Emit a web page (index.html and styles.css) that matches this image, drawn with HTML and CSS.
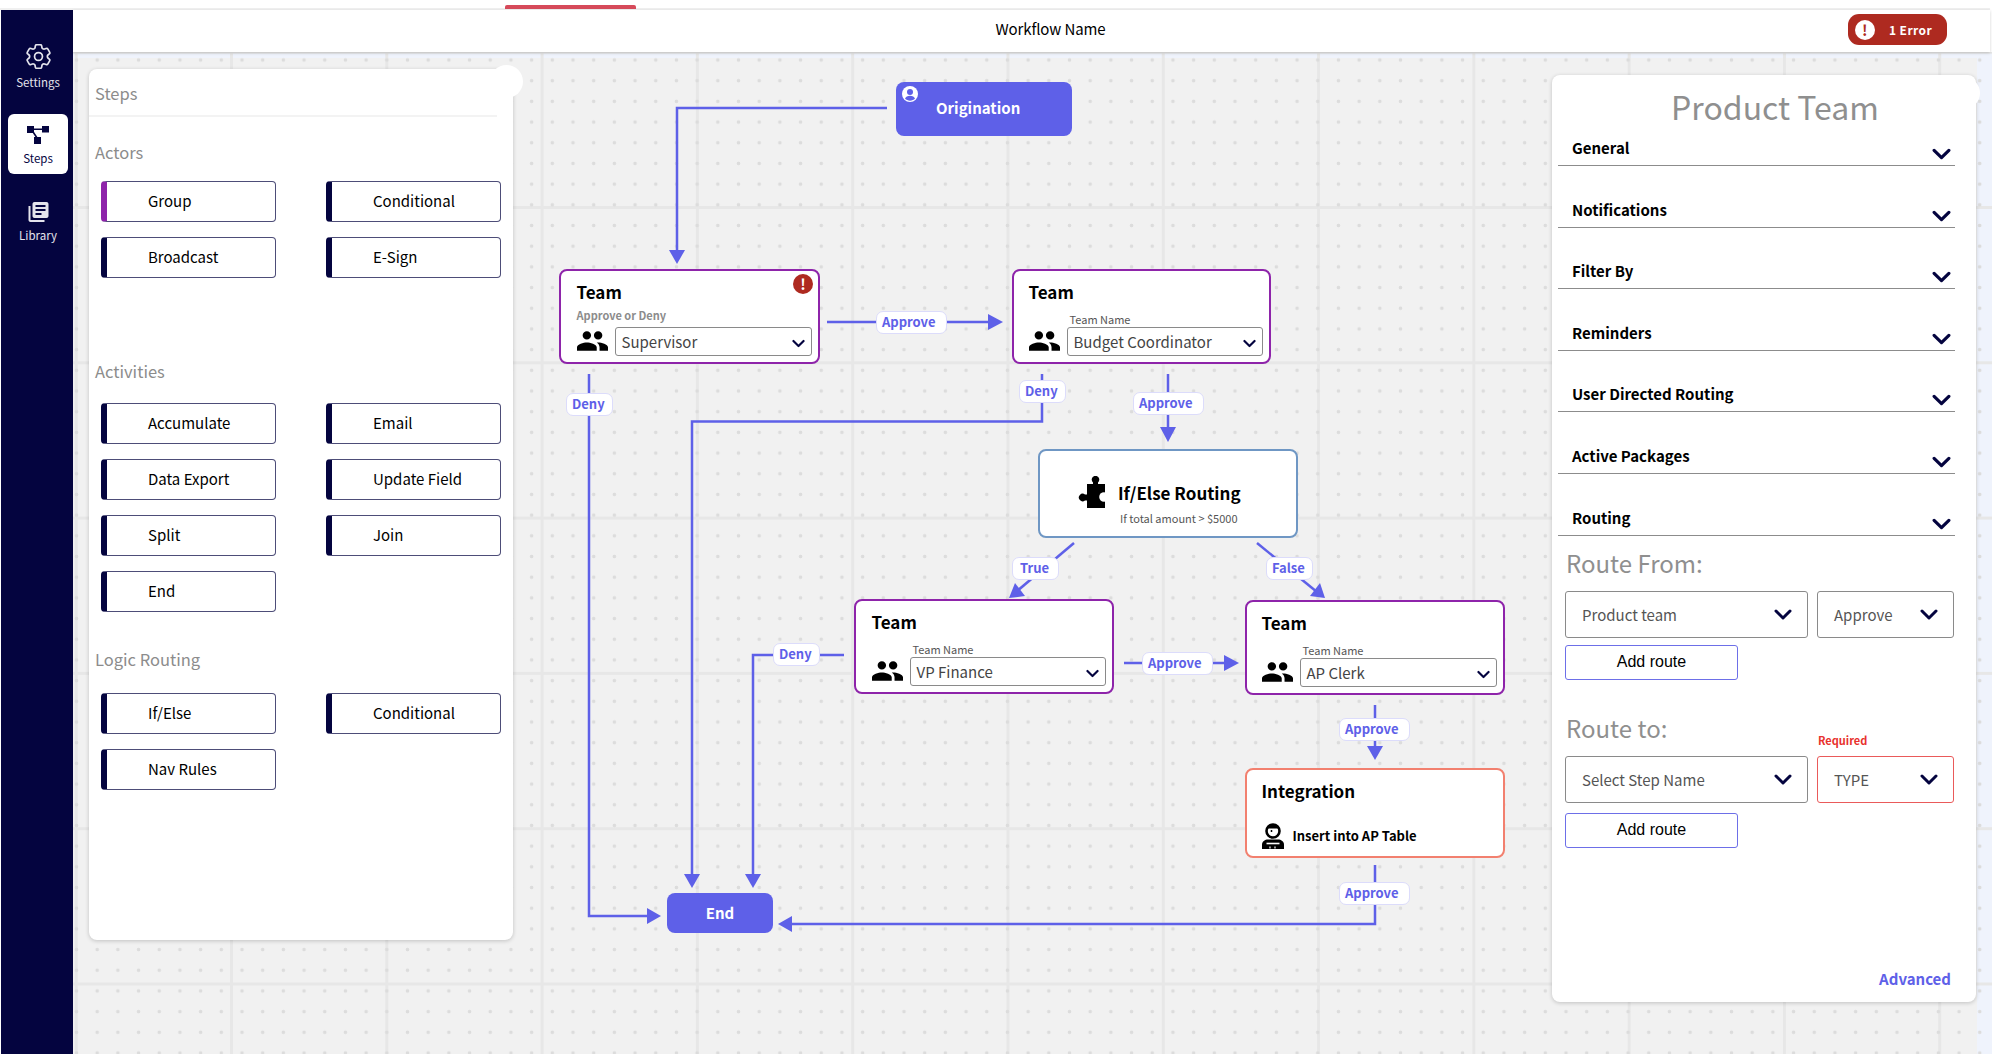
FILE: index.html
```html
<!DOCTYPE html>
<html lang="en">
<head>
    <meta charset="UTF-8">
    <meta name="viewport" content="width=device-width, initial-scale=1.0">
    <title>Workflow Name</title>
    <link rel="stylesheet" href="styles.css">
</head>

<body>
    <svg class="icon-defs" aria-hidden="true">
        <symbol id="chevron" viewBox="0 0 18 11">
            <path d="M2 2l7 7 7-7" fill="none" stroke="currentColor" stroke-width="3" stroke-linecap="round" stroke-linejoin="round"/>
        </symbol>
        <symbol id="people" viewBox="1 5 22 14">
            <path d="M16 11c1.66 0 2.99-1.34 2.99-3S17.66 5 16 5c-1.66 0-3 1.34-3 3s1.34 3 3 3zm-8 0c1.66 0 2.99-1.34 2.99-3S9.66 5 8 5C6.34 5 5 6.34 5 8s1.34 3 3 3zm0 2c-2.33 0-7 1.17-7 3.5V19h14v-2.5c0-2.33-4.67-3.5-7-3.5zm8 0c-.29 0-.62.02-.97.05 1.16.84 1.97 1.97 1.97 3.45V19h6v-2.5c0-2.33-4.67-3.5-7-3.5z"/>
        </symbol>
    </svg>

    <div class="top-strip"><div class="top-strip-bar"></div></div>

    <div class="app">
        <nav class="sidebar">
            <a class="nav-item nav-settings">
                <svg class="nav-icon-gear" viewBox="2.5 2.5 19 19" fill="none" stroke="currentColor" stroke-width="1.3">
                    <path d="M9.594 3.94c.09-.542.56-.94 1.11-.94h2.593c.55 0 1.02.398 1.11.94l.213 1.281c.063.374.313.686.645.87.074.04.147.083.22.127.325.196.72.257 1.075.124l1.217-.456a1.125 1.125 0 0 1 1.37.49l1.296 2.247a1.125 1.125 0 0 1-.26 1.431l-1.003.827c-.293.241-.438.613-.43.992a7.723 7.723 0 0 1 0 .255c-.008.378.137.75.43.991l1.004.827c.424.35.534.955.26 1.43l-1.298 2.247a1.125 1.125 0 0 1-1.369.491l-1.217-.456c-.355-.133-.75-.072-1.076.124a6.47 6.47 0 0 1-.22.128c-.331.183-.581.495-.644.869l-.213 1.281c-.09.543-.56.94-1.11.94h-2.594c-.55 0-1.019-.398-1.11-.94l-.213-1.281c-.062-.374-.312-.686-.644-.87a6.52 6.52 0 0 1-.22-.127c-.325-.196-.72-.257-1.076-.124l-1.217.456a1.125 1.125 0 0 1-1.369-.49l-1.297-2.247a1.125 1.125 0 0 1 .26-1.431l1.004-.827c.292-.24.437-.613.43-.991a6.932 6.932 0 0 1 0-.255c.007-.38-.138-.751-.43-.992l-1.004-.827a1.125 1.125 0 0 1-.26-1.43l1.297-2.247a1.125 1.125 0 0 1 1.37-.491l1.216.456c.356.133.751.072 1.076-.124.072-.044.146-.086.22-.128.332-.183.582-.495.644-.869l.214-1.28Z"/>
                    <circle cx="12" cy="12" r="3"/>
                </svg>
                <span>Settings</span>
            </a>
            <a class="nav-item nav-steps">
                <svg class="nav-icon-steps" viewBox="0 0 22 18" fill="currentColor">
                    <rect x="0" y="0" width="7" height="7"/>
                    <rect x="15" y="0" width="7" height="6.5"/>
                    <rect x="7" y="11" width="7" height="7"/>
                    <path d="M6 2.5h10v1.6H6zM4.500 5l1.400-.8 5 7.600-1.400.9z"/>
                </svg>
                <span>Steps</span>
            </a>
            <a class="nav-item nav-library">
                <svg class="nav-icon-library" viewBox="2 2 20 20" fill="currentColor">
                    <path d="M4 6H2v14c0 1.1.9 2 2 2h14v-2H4V6zm16-4H8c-1.1 0-2 .9-2 2v12c0 1.1.9 2 2 2h12c1.1 0 2-.9 2-2V4c0-1.1-.9-2-2-2zm-1 9H9V9h10v2zm-4 4H9v-2h6v2zm4-8H9V5h10v2z"/>
                </svg>
                <span>Library</span>
            </a>
        </nav>

        <div class="main">
            <header class="header">
                <div class="header-title">Workflow Name</div>
                <div class="error-pill">
                    <span class="error-pill-dot">!</span>
                    <span>1 Error</span>
                </div>
            </header>

            <div class="canvas">
                <aside class="steps-panel">
                    <div class="steps-title">Steps</div>

                    <section class="steps-section section-actors">
                        <h3>Actors</h3>
                        <div class="steps-grid">
                            <div class="step-btn step-btn-group">Group</div>
                            <div class="step-btn">Conditional</div>
                            <div class="step-btn">Broadcast</div>
                            <div class="step-btn">E-Sign</div>
                        </div>
                    </section>

                    <section class="steps-section section-activities">
                        <h3>Activities</h3>
                        <div class="steps-grid">
                            <div class="step-btn">Accumulate</div>
                            <div class="step-btn">Email</div>
                            <div class="step-btn">Data Export</div>
                            <div class="step-btn">Update Field</div>
                            <div class="step-btn">Split</div>
                            <div class="step-btn">Join</div>
                            <div class="step-btn">End</div>
                        </div>
                    </section>

                    <section class="steps-section section-logic">
                        <h3>Logic Routing</h3>
                        <div class="steps-grid">
                            <div class="step-btn">If/Else</div>
                            <div class="step-btn">Conditional</div>
                            <div class="step-btn">Nav Rules</div>
                        </div>
                    </section>
                </aside>

                <div class="diagram">
                    <!-- edges use page coordinates, the viewBox starts where the diagram starts -->
                    <svg class="edges" viewBox="513 52 1039 1002" fill="none" stroke="#5e60e8" stroke-width="2.5">
                        <path d="M887 108H677V252"/>
                        <path d="M827 322H990"/>
                        <path d="M589 374V916H650"/>
                        <path d="M1042 374V421.5H692V876"/>
                        <path d="M1168 374V429"/>
                        <path d="M1074 543L1016 592"/>
                        <path d="M1257 543L1317 592"/>
                        <path d="M844 655H753V876"/>
                        <path d="M1124 663H1226"/>
                        <path d="M1375 705V748"/>
                        <path d="M1375 865V924H790"/>
                        <g fill="#5e60e8" stroke="none">
                            <polygon points="669,250 685,250 677,264"/>
                            <polygon points="988,314 1003,322 988,330"/>
                            <polygon points="1160,427 1176,427 1168,442"/>
                            <polygon points="1009,598 1015,583 1025,596"/>
                            <polygon points="1325,598 1310,596 1320,583"/>
                            <polygon points="1224,655 1239,663 1224,671"/>
                            <polygon points="1367,746 1383,746 1375,760"/>
                            <polygon points="684,874 700,874 692,888"/>
                            <polygon points="745,874 761,874 753,888"/>
                            <polygon points="647,908 661,916 647,924"/>
                            <polygon points="792,916 778,924 792,932"/>
                        </g>
                    </svg>

                    <div class="node origination">
                        <svg class="origination-icon" viewBox="0 0 16 16">
                            <circle cx="8" cy="8" r="8" fill="#fff"/>
                            <circle cx="8" cy="6" r="3" fill="#5e60e8"/>
                            <path d="M3 12.600c.6-1.900 2.600-2.900 5-2.900s4.400 1 5 2.900C11.800 14 10 14.700 8 14.700S4.200 14 3 12.600z" fill="#5e60e8"/>
                        </svg>
                        <span>Origination</span>
                    </div>

                    <div class="node team team-a">
                        <span class="team-error">!</span>
                        <h4>Team</h4>
                        <p class="team-hint">Approve or Deny</p>
                        <div class="team-row">
                            <svg class="team-icon"><use href="#people"/></svg>
                            <div class="team-field">
                                <div class="team-select"><span>Supervisor</span><svg class="team-chevron"><use href="#chevron"/></svg></div>
                            </div>
                        </div>
                    </div>

                    <div class="node team team-b">
                        <h4>Team</h4>
                        <div class="team-row">
                            <svg class="team-icon"><use href="#people"/></svg>
                            <div class="team-field">
                                <div class="team-caption">Team Name</div>
                                <div class="team-select"><span>Budget Coordinator</span><svg class="team-chevron"><use href="#chevron"/></svg></div>
                            </div>
                        </div>
                    </div>

                    <div class="node ifelse">
                        <div class="ifelse-head">
                            <svg class="ifelse-icon" viewBox="0 0 30 32">
                                <path d="M10 8h6V6.500a3.800 3.800 0 1 1 5 0V8h7v24H10v-7.500H8a3.800 3.800 0 1 1 0-6h2z"/>
                                <circle cx="27" cy="21" r="4.800" fill="#fff"/>
                            </svg>
                            <span>If/Else Routing</span>
                        </div>
                        <div class="ifelse-sub">If total amount &gt; $5000</div>
                    </div>

                    <div class="node team team-c">
                        <h4>Team</h4>
                        <div class="team-row">
                            <svg class="team-icon"><use href="#people"/></svg>
                            <div class="team-field">
                                <div class="team-caption">Team Name</div>
                                <div class="team-select"><span>VP Finance</span><svg class="team-chevron"><use href="#chevron"/></svg></div>
                            </div>
                        </div>
                    </div>

                    <div class="node team team-d">
                        <h4>Team</h4>
                        <div class="team-row">
                            <svg class="team-icon"><use href="#people"/></svg>
                            <div class="team-field">
                                <div class="team-caption">Team Name</div>
                                <div class="team-select"><span>AP Clerk</span><svg class="team-chevron"><use href="#chevron"/></svg></div>
                            </div>
                        </div>
                    </div>

                    <div class="node integration">
                        <h4>Integration</h4>
                        <div class="integration-row">
                            <svg class="integration-icon" viewBox="0 0 22 26">
                                <circle cx="11" cy="8" r="6.500" fill="#fff" stroke="#000" stroke-width="2.600"/>
                                <path d="M4.800 5.500a6.500 6.500 0 0 1 12.400 0z"/>
                                <path d="M8.500 8h2M9.500 7v2" stroke="#000" stroke-width="1"/>
                                <path d="M0 26v-4.500C0 18.500 3 16.500 6 16.500h10c3 0 6 2 6 5V26z"/>
                                <path d="M8 23.500v2M13 23.500v2" stroke="#fff" stroke-width="1.200"/>
                                <path d="M4.500 20.500h13" stroke="#fff" stroke-width="1.600"/>
                            </svg>
                            <span>Insert into AP Table</span>
                        </div>
                    </div>

                    <div class="node end">End</div>

                    <span class="edge-label label-approve-a">Approve</span>
                    <span class="edge-label label-deny-a">Deny</span>
                    <span class="edge-label label-deny-b">Deny</span>
                    <span class="edge-label label-approve-b">Approve</span>
                    <span class="edge-label label-true">True</span>
                    <span class="edge-label label-false">False</span>
                    <span class="edge-label label-deny-c">Deny</span>
                    <span class="edge-label label-approve-c">Approve</span>
                    <span class="edge-label label-approve-d">Approve</span>
                    <span class="edge-label label-approve-e">Approve</span>
                </div>

                <aside class="props-panel">
                    <div class="props-title">Product Team</div>

                    <div class="acc-row"><span>General</span><svg class="acc-chevron"><use href="#chevron"/></svg></div>
                    <div class="acc-row"><span>Notifications</span><svg class="acc-chevron"><use href="#chevron"/></svg></div>
                    <div class="acc-row"><span>Filter By</span><svg class="acc-chevron"><use href="#chevron"/></svg></div>
                    <div class="acc-row"><span>Reminders</span><svg class="acc-chevron"><use href="#chevron"/></svg></div>
                    <div class="acc-row"><span>User Directed Routing</span><svg class="acc-chevron"><use href="#chevron"/></svg></div>
                    <div class="acc-row"><span>Active Packages</span><svg class="acc-chevron"><use href="#chevron"/></svg></div>
                    <div class="acc-row"><span>Routing</span><svg class="acc-chevron"><use href="#chevron"/></svg></div>

                    <h3 class="route-heading route-from">Route From:</h3>
                    <div class="route-selects">
                        <div class="route-select route-select-wide"><span>Product team</span><svg class="route-chevron"><use href="#chevron"/></svg></div>
                        <div class="route-select route-select-small"><span>Approve</span><svg class="route-chevron"><use href="#chevron"/></svg></div>
                    </div>
                    <button class="add-route add-route-from">Add route</button>

                    <h3 class="route-heading route-to">Route to:</h3>
                    <div class="route-selects">
                        <div class="route-select route-select-wide"><span>Select Step Name</span><svg class="route-chevron"><use href="#chevron"/></svg></div>
                        <div class="route-select route-select-small route-select-error">
                            <span class="route-required">Required</span>
                            <span>TYPE</span><svg class="route-chevron"><use href="#chevron"/></svg>
                        </div>
                    </div>
                    <button class="add-route add-route-to">Add route</button>

                    <a class="advanced-link">Advanced</a>
                </aside>
            </div>
        </div>
    </div>
</body>

</html>
```

FILE: styles.css
```css
* {
    box-sizing: border-box;
}

body {
    margin: 0;
    width: 1992px;
    height: 1054px;
    overflow: hidden;
    background: #fff;
    font-family: "Noto Sans CJK SC", "Noto Sans", sans-serif;
    color: #000;
}

h3, h4, p {
    margin: 0;
}

.icon-defs {
    display: none;
}

.top-strip {
    position: relative;
    height: 10px;
    margin-right: 2px;
    border-bottom: 2px solid #f0f0f0;
}

.top-strip-bar {
    position: absolute;
    left: 505px;
    top: 5px;
    width: 131px;
    height: 4px;
    background: #d64a5a;
    border-radius: 2px 2px 0 0;
}

.app {
    display: flex;
    height: 1044px;
}

/* sidebar */
.sidebar {
    width: 72px;
    margin-left: 1px;
    padding: 22px 0 0 7px;
    background: #04043f;
    flex: none;
}

.nav-item {
    display: flex;
    flex-direction: column;
    align-items: center;
    width: 60px;
    height: 60px;
    padding-top: 12px;
    color: #fff;
    font-size: 11.5px;
    line-height: 16px;
    border-radius: 6px;
}

.nav-settings {
    margin-bottom: 22px;
    color: #e4e4ec;
    gap: 5px;
}

.nav-steps {
    margin-bottom: 16px;
    background: #fff;
    color: #04043f;
    gap: 6px;
}

.nav-library {
    color: #e4e4ec;
    gap: 5px;
}

.nav-icon-gear {
    width: 25px;
    height: 25px;
}

.nav-icon-steps {
    width: 22px;
    height: 18px;
}

.nav-icon-library {
    width: 21px;
    height: 20px;
}

/* header and canvas */
.main {
    flex: 1;
    display: flex;
    flex-direction: column;
    min-width: 0;
}

.header {
    position: relative;
    z-index: 3;
    height: 42px;
    margin-right: 2px;
    background: #fff;
    box-shadow: 0 1px 3px rgba(0, 0, 0, 0.18);
    display: flex;
    align-items: center;
    justify-content: center;
}

.header-title {
    margin-left: 38px;
    padding-bottom: 5px;
    font-size: 15px;
    letter-spacing: -0.1px;
}

.error-pill {
    position: absolute;
    left: 1775px;
    top: 4px;
    width: 99px;
    height: 31px;
    display: flex;
    align-items: center;
    gap: 14px;
    padding-left: 7px;
    background: #ae2a20;
    border-radius: 11px;
    color: #fff;
    font-size: 12px;
    font-weight: 700;
    letter-spacing: 0.4px;
}

.error-pill-dot {
    width: 20px;
    height: 20px;
    border-radius: 50%;
    background: #fff;
    color: #ae2a20;
    font-size: 15px;
    line-height: 20px;
    text-align: center;
}

.canvas {
    flex: 1;
    display: flex;
    min-height: 0;
    background-color: #f1f1f1;
    background-image:
        radial-gradient(circle, #dcdcdc 1.5px, transparent 2.1px),
        linear-gradient(to right, #e7e7e7 2.5px, transparent 2.5px),
        linear-gradient(to bottom, #e7e7e7 2.5px, transparent 2.5px),
        linear-gradient(to bottom, #eff3fc 6px, transparent 6px),
        linear-gradient(to right, transparent calc(100% - 15px), #eff3fc 0);
    background-size: 20.7px 20.7px, 155.3px 100%, 100% 155.3px, 100% 100%, 100% 100%;
    background-position: -6.85px -2.35px, 1.7px 0, 0 -1.3px, 0 0, 0 0;
}

/* steps panel */
.steps-panel {
    position: relative;
    z-index: 2;
    flex: none;
    width: 424px;
    height: 871px;
    margin: 17px 0 0 16px;
    background: #fff;
    border-radius: 8px;
    box-shadow: 0 1px 4px rgba(0, 0, 0, 0.2);
}

/* little white bump on the panel corner */
.steps-panel::after {
    content: "";
    position: absolute;
    left: 401px;
    top: -4px;
    width: 33px;
    height: 33px;
    border-radius: 50%;
    background: #fff;
}

.steps-title {
    margin-right: 16px;
    padding: 12px 0 10px 6px;
    font-size: 16.5px;
    line-height: 24px;
    color: #8c8c8c;
    border-bottom: 2px solid #f3f3f3;
}

.steps-section {
    padding: 0 12px;
}

.steps-section h3 {
    margin-left: -6px;
    font-size: 16.5px;
    font-weight: 400;
    line-height: 24px;
    color: #8c8c8c;
}

.section-actors {
    margin-top: 23px;
}

.section-actors h3 {
    margin-bottom: 17px;
}

.section-activities {
    margin-top: 81px;
}

.section-activities h3 {
    margin-bottom: 20px;
}

.section-logic {
    margin-top: 35px;
}

.section-logic h3 {
    margin-bottom: 22px;
}

.steps-grid {
    display: grid;
    grid-template-columns: 175px 175px;
    column-gap: 50px;
    row-gap: 15px;
}

.step-btn {
    height: 41px;
    padding-left: 41px;
    border: 1.5px solid #4d4d78;
    border-left: 6px solid #04043f;
    border-radius: 4px;
    font-size: 15px;
    line-height: 37px;
    color: #000;
}

.step-btn-group {
    border-left-color: #8e24aa;
}

/* diagram */
.diagram {
    position: relative;
    flex: 1;
}

.edges {
    position: absolute;
    left: 0;
    top: 0;
    width: 1039px;
    height: 1002px;
}

.node {
    position: absolute;
    background: #fff;
    border-radius: 8px;
}

.origination {
    left: 383px;
    top: 30px;
    width: 176px;
    height: 54px;
    padding-left: 40px;
    background: #5e60e8;
    color: #fff;
    font-size: 15px;
    font-weight: 700;
    line-height: 52px;
}

.origination-icon {
    position: absolute;
    left: 6px;
    top: 4px;
    width: 16px;
    height: 16px;
}

.team {
    display: flex;
    flex-direction: column;
    padding: 8.5px 6.5px 6.5px 15.5px;
    border: 2.5px solid #8e24aa;
}

.team h4,
.integration h4 {
    font-size: 17px;
    font-weight: 700;
    line-height: 24px;
}

.team-a {
    left: 46px;
    top: 217px;
    width: 261px;
    height: 95px;
}

.team-b {
    left: 499px;
    top: 217px;
    width: 259px;
    height: 95px;
    padding-left: 14.5px;
}

.team-c {
    left: 341px;
    top: 547px;
    width: 260px;
    height: 95px;
}

.team-d {
    left: 732px;
    top: 548px;
    width: 260px;
    height: 95px;
    padding-left: 14.5px;
}

.team-error {
    position: absolute;
    right: 5px;
    top: 3px;
    width: 20px;
    height: 20px;
    border-radius: 50%;
    background: #ae2a20;
    color: #fff;
    font-size: 15px;
    font-weight: 700;
    line-height: 20px;
    text-align: center;
}

.team-hint {
    margin-top: 3px;
    font-size: 11px;
    font-weight: 700;
    line-height: 16px;
    color: #8c8c8c;
}

.team-row {
    display: flex;
    align-items: flex-end;
    gap: 7px;
    margin-top: auto;
}

.team-icon {
    flex: none;
    width: 31px;
    height: 20px;
    margin-bottom: 5px;
}

.team-field {
    flex: 1;
    min-width: 0;
}

.team-caption {
    margin: 0 0 1.5px 3px;
    font-size: 11px;
    line-height: 12px;
    color: #555;
}

.team-select {
    display: flex;
    align-items: center;
    justify-content: space-between;
    height: 29px;
    padding: 0 6px;
    border: 1px solid #8a8a8a;
    border-radius: 3px;
    background: #fff;
    font-size: 15px;
    color: #444;
}

.team-chevron {
    width: 13px;
    height: 9px;
    margin-top: 4px;
    color: #04043f;
}

.ifelse {
    left: 525px;
    top: 397px;
    width: 260px;
    height: 89px;
    border: 2px solid #6f97c4;
}

.ifelse-head {
    display: flex;
    align-items: center;
    gap: 11px;
    margin: 25px 0 0 37px;
    height: 32px;
    font-size: 17px;
    font-weight: 700;
}

.ifelse-icon {
    width: 30px;
    height: 32px;
}

.ifelse-sub {
    margin: 1px 0 0 80px;
    font-size: 11px;
    line-height: 18px;
    color: #555;
}

.integration {
    left: 732px;
    top: 716px;
    width: 260px;
    height: 90px;
    padding: 8.5px 0 0 14.5px;
    border: 2.5px solid #f2806f;
}

.integration-row {
    display: flex;
    align-items: center;
    gap: 9px;
    margin-top: 20px;
    font-size: 13px;
    font-weight: 700;
}

.integration-icon {
    width: 22px;
    height: 26px;
}

.end {
    left: 154px;
    top: 841px;
    width: 106px;
    height: 40px;
    background: #5e60e8;
    color: #fff;
    font-size: 15px;
    font-weight: 700;
    line-height: 39px;
    text-align: center;
}

.edge-label {
    position: absolute;
    height: 23px;
    width: 71px;
    padding-left: 5px;
    border: 1.5px solid #dcdcfb;
    border-radius: 7px;
    background: #fff;
    color: #5e60e8;
    font-size: 13px;
    font-weight: 700;
    line-height: 19px;
}

.label-approve-a { left: 363px; top: 259px; }
.label-deny-a { left: 53px; top: 341px; width: 47px; }
.label-deny-b { left: 506px; top: 328px; width: 47px; }
.label-approve-b { left: 620px; top: 340px; }
.label-true { left: 499px; top: 505px; width: 47px; padding-left: 7px; }
.label-false { left: 753px; top: 505px; width: 47px; }
.label-deny-c { left: 260px; top: 591px; width: 47px; }
.label-approve-c { left: 629px; top: 600px; }
.label-approve-d { left: 826px; top: 666px; }
.label-approve-e { left: 826px; top: 830px; }

/* properties panel */
.props-panel {
    position: relative;
    z-index: 2;
    flex: none;
    display: flex;
    flex-direction: column;
    width: 424px;
    height: 927px;
    margin: 23px 16px 0 0;
    padding-top: 11px;
    background: #fff;
    border-radius: 8px;
    box-shadow: 0 1px 4px rgba(0, 0, 0, 0.2);
}

.props-panel::after {
    content: "";
    position: absolute;
    left: 396px;
    top: 2px;
    width: 32px;
    height: 32px;
    border-radius: 50%;
    background: #fff;
}

.props-title {
    position: relative;
    z-index: 1;
    height: 44px;
    margin-left: 22px;
    font-size: 32px;
    line-height: 40px;
    text-align: center;
    color: #8f8f8f;
}

.acc-row {
    display: flex;
    align-items: flex-end;
    justify-content: space-between;
    height: 36px;
    margin: 25.6px 21px 0 6px;
    padding: 0 4px 5px 14px;
    border-bottom: 1.5px solid #8c8c8c;
    font-size: 15px;
    font-weight: 700;
    line-height: 24px;
}

.props-title + .acc-row {
    margin-top: 0;
}

.acc-chevron {
    width: 19px;
    height: 12px;
    color: #04043f;
}

.route-heading {
    margin-left: 14px;
    font-size: 24px;
    font-weight: 400;
    line-height: 32px;
    color: #8f8f8f;
}

.route-from {
    margin-top: 11px;
}

.route-to {
    margin-top: 32px;
}

.route-selects {
    display: flex;
    gap: 9px;
    margin: 12px 0 0 13px;
}

.route-select {
    position: relative;
    display: flex;
    align-items: center;
    justify-content: space-between;
    height: 47px;
    border: 1.5px solid #8a8a8a;
    border-radius: 3px;
    font-size: 15px;
    color: #555;
}

.route-select-wide {
    width: 243px;
    padding: 0 15px 0 16px;
}

.route-select-small {
    width: 137px;
    padding: 0 15px 0 16px;
}

.route-select-error {
    border-color: #ea5a5a;
}

.route-required {
    position: absolute;
    left: 0;
    top: -25px;
    font-size: 11px;
    font-weight: 700;
    line-height: 16px;
    color: #e8322e;
}

.route-chevron {
    width: 18px;
    height: 11px;
    color: #04043f;
}

.add-route {
    display: block;
    width: 173px;
    height: 35px;
    margin-left: 13px;
    padding: 0;
    border: 1.5px solid #6d6fe8;
    border-radius: 3px;
    background: #fff;
    font-family: "Liberation Sans", sans-serif;
    font-size: 16px;
    color: #000;
}

.add-route-from {
    margin-top: 7px;
}

.add-route-to {
    margin-top: 10px;
}

.advanced-link {
    margin-top: auto;
    align-self: flex-end;
    padding: 0 25px 11px 0;
    font-size: 15px;
    font-weight: 700;
    line-height: 24px;
    color: #5e60e8;
}
```
